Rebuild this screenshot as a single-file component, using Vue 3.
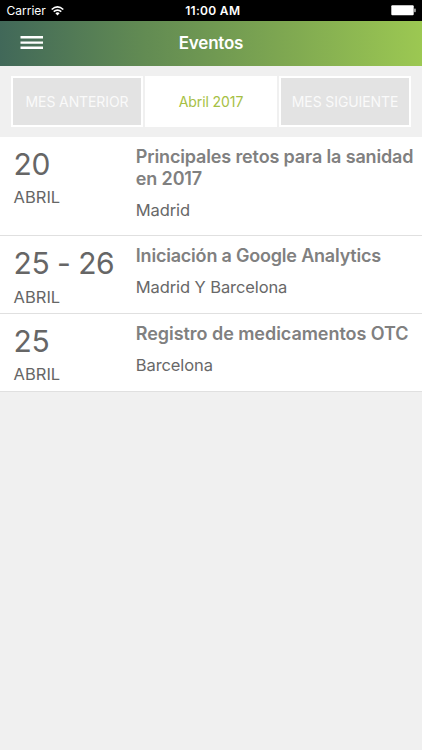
<script setup>
const events = [
  { day: '20', month: 'ABRIL', title: 'Principales retos para la sanidad en 2017', place: 'Madrid', key: 'a' },
  { day: '25 - 26', month: 'ABRIL', title: 'Iniciación a Google Analytics', place: 'Madrid Y Barcelona', key: 'b' },
  { day: '25', month: 'ABRIL', title: 'Registro de medicamentos OTC', place: 'Barcelona', key: 'c' },
]
</script>

<template>
  <div class="screen">
    <div class="status">
      <div class="carrier">
        <span>Carrier</span>
        <svg class="wifi" width="13" height="10" viewBox="0 0 13 10">
          <path d="M0.7 3.5 Q6.5 -1.8 12.3 3.5" fill="none" stroke="#fff" stroke-width="1.6" />
          <path d="M2.7 5.7 Q6.5 2.4 10.3 5.7" fill="none" stroke="#fff" stroke-width="1.6" />
          <path d="M4.4 7.2 Q6.5 5.4 8.6 7.2 L6.5 9.4 Z" fill="#fff" />
        </svg>
      </div>
      <span class="clock">11:00 AM</span>
      <svg class="battery" width="25" height="11" viewBox="0 0 25 11">
        <rect x="0.3" y="0.3" width="22.4" height="10" rx="1" fill="#fff" />
        <rect x="23.1" y="3.4" width="1.7" height="3.8" rx="0.6" fill="#aaa" />
      </svg>
    </div>
    <header class="bar">
      <svg class="menu" width="23" height="14" viewBox="0 0 23 14">
        <path d="M0.5 1.3H23M0.5 6.6H23M0.5 11.8H23" stroke="#fff" stroke-width="2.4" />
      </svg>
      <h1>Eventos</h1>
    </header>
    <nav class="months">
      <button class="step">MES ANTERIOR</button>
      <div class="current">Abril 2017</div>
      <button class="step">MES SIGUIENTE</button>
    </nav>
    <ul class="list">
      <li v-for="e in events" :key="e.key" class="row">
        <div class="date">
          <div class="day">{{ e.day }}</div>
          <div class="month">{{ e.month }}</div>
        </div>
        <div class="info">
          <h2>{{ e.title }}</h2>
          <p>{{ e.place }}</p>
        </div>
      </li>
    </ul>
  </div>
</template>

<style>
body { margin: 0; background: #f0f0f0; }
</style>

<style scoped>
.screen { width: 422px; height: 750px; overflow: hidden; background: #f0f0f0; font-family: Inter, "Liberation Sans", sans-serif; }
.status { height: 21px; background: #000; color: #fff; display: grid; grid-template-columns: 1fr auto 1fr; align-items: center; box-sizing: border-box; padding: 0 6px 0 6.5px; font-size: 12px; }
.carrier { display: flex; align-items: center; gap: 5px; }
.clock { font-weight: 600; font-size: 12px; letter-spacing: 0.3px; padding-left: 3px; }
.battery { justify-self: end; }
.bar { height: 45px; background: linear-gradient(90deg, #416859 0%, #618a53 33%, #7da651 66%, #9cc852 100%); display: grid; grid-template-columns: 1fr auto 1fr; align-items: center; box-sizing: border-box; padding: 0 20px 2px; }
.bar h1 { margin: 0; color: #fff; font-size: 17px; font-weight: 600; line-height: 22px; letter-spacing: -0.2px; }
.months { height: 71px; box-sizing: border-box; padding: 10px 11px; display: grid; grid-template-columns: 132px 132px 132px; gap: 2px; }
.step, .current { height: 51px; box-sizing: border-box; display: flex; align-items: center; justify-content: center; font-family: inherit; font-size: 14px; font-weight: 400; letter-spacing: -0.1px; white-space: nowrap; padding: 0; }
.step { border: 2px solid #fff; background: #e3e3e3; color: #fafafa; }
.current { background: #fff; color: #a6c044; }
.list { margin: 0; padding: 0; list-style: none; background: #fff; }
.row { display: flex; box-sizing: border-box; min-height: 77.7px; border-bottom: 1px solid #e0e0e0; padding-left: 13.6px; }
.date { width: 122.2px; color: #666; padding-top: 8.7px; }
.day { font-size: 30px; line-height: 36px; letter-spacing: -0.5px; white-space: nowrap; }
.month { font-size: 16.5px; line-height: 20px; margin-top: 5.7px; }
.info { flex: 1; padding: 9px 0 14.6px; color: #686868; white-space: nowrap; }
.info h2 { margin: 0; width: 284px; white-space: normal; font-size: 18px; line-height: 21.6px; font-weight: 600; letter-spacing: -0.14px; color: #808080; }
.row:nth-child(2) h2 { letter-spacing: -0.2px; }
.row:nth-child(3) h2 { letter-spacing: -0.05px; }
.info p { margin: 10.4px 0 0; font-size: 16.5px; line-height: 21px; letter-spacing: -0.1px; }
</style>
